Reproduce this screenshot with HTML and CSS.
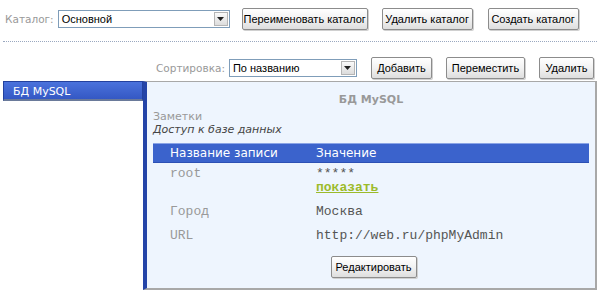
FILE: index.html
```html
<!DOCTYPE html>
<html lang="ru">
<head>
  <meta charset="UTF-8">
  <title>Каталог</title>
  <link rel="stylesheet" href="styles.css">
</head>
<body>
  <div class="toolbar top">
    <span class="label">Каталог:</span>
    <div class="combo catalog">
      <span class="value">Основной</span>
      <span class="arrow"><svg width="7" height="4" viewBox="0 0 7 4"><path d="M0 0h7L3.5 4z" fill="#222"/></svg></span>
    </div>
    <button class="btn b-rename">Переименовать каталог</button>
    <button class="btn b-del">Удалить каталог</button>
    <button class="btn b-new">Создать каталог</button>
  </div>

  <div class="divider"></div>

  <div class="toolbar sort">
    <span class="label">Сортировка:</span>
    <div class="combo sorter">
      <span class="value">По названию</span>
      <span class="arrow"><svg width="7" height="4" viewBox="0 0 7 4"><path d="M0 0h7L3.5 4z" fill="#222"/></svg></span>
    </div>
    <button class="btn b-add">Добавить</button>
    <button class="btn b-move">Переместить</button>
    <button class="btn b-remove">Удалить</button>
  </div>

  <div class="main">
    <div class="tabs">
      <div class="tab active">БД MySQL</div>
    </div>
    <div class="panel">
      <div class="title">БД MySQL</div>
      <div class="notes-label">Заметки</div>
      <div class="notes">Доступ к базе данных</div>

      <table class="records">
        <tr class="head">
          <th class="c-name">Название записи</th>
          <th>Значение</th>
        </tr>
        <tr>
          <td class="c-name">root</td>
          <td class="val">*****<br><a href="#" class="show">показать</a></td>
        </tr>
        <tr>
          <td class="c-name">Город</td>
          <td class="val">Москва</td>
        </tr>
        <tr>
          <td class="c-name">URL</td>
          <td class="val">http://web.ru/phpMyAdmin</td>
        </tr>
      </table>

      <div class="actions">
        <button class="btn">Редактировать</button>
      </div>
    </div>
  </div>
</body>
</html>
```

FILE: styles.css
```css
body {
  margin: 0;
  background: #fff;
  font-family: "DejaVu Sans", Verdana, sans-serif;
  color: #333;
}
.toolbar {
  display: flex;
  align-items: center;
}
.toolbar.top {
  height: 22px;
  padding: 8px 0 0 5px;
}
.toolbar.sort {
  height: 22px;
  padding: 0 6px 0 156px;
  margin-top: 15px;
}
.label {
  font-size: 10.5px;
  color: #999;
}
.combo {
  display: flex;
  align-items: center;
  box-sizing: border-box;
  height: 18px;
  border: 1px solid #7f9db9;
  background: #fff;
  margin-left: 4px;
  padding: 1px;
}
.combo.catalog { width: 172px; }
.combo.sorter { width: 128px; }
.combo .value {
  flex: 1;
  font-family: "Liberation Sans", Arial, sans-serif;
  font-size: 11px;
  color: #000;
  padding-left: 2px;
}
.combo .arrow {
  display: flex;
  align-items: center;
  justify-content: center;
  width: 14px;
  height: 14px;
  box-sizing: border-box;
  border: 1px solid #b5b5b5;
  background: linear-gradient(#fafafa, #dcdcdc);
}
.btn {
  box-sizing: border-box;
  height: 22px;
  padding: 0;
  white-space: nowrap;
  border: 1px solid #8c8c8c;
  border-radius: 2px;
  background: linear-gradient(#ffffff, #f2f2f2 50%, #dedede);
  font-family: "Liberation Sans", Arial, sans-serif;
  font-size: 11px;
  color: #000;
  box-shadow: 1px 1px 0 #d0d0d0;
}
.b-rename { margin-left: 12px; width: 126px; }
.b-del { margin-left: 14px; width: 91px; }
.b-new { margin-left: 15px; width: 91px; }
.b-add { margin-left: 14px; width: 61px; }
.b-move { margin-left: 14px; width: 79px; }
.b-remove { margin-left: 14px; width: 55px; }
.divider {
  margin: 11px 3px 0;
  border-top: 1px dotted #9aa8c0;
}
.main {
  display: flex;
  margin: 2px 3px 0;
  height: 209px;
}
.tabs {
  width: 140px;
}
.tab {
  box-sizing: border-box;
  height: 20px;
  padding: 3px 0 0 9px;
  font-size: 11px;
  color: #fff;
  border: 1px solid #23419e;
  border-bottom: 2px solid #6a7a9a;
  background: linear-gradient(#4a72dc, #3458c4);
}
.panel {
  flex: 1;
  box-sizing: border-box;
  background: #eef5fe;
  border: 1px solid #a8a8a8;
  border-left: 4px solid #2444a8;
  border-right: 2px solid #a8a8a8;
  border-bottom: 2px solid #a8a8a8;
  padding: 0 6px;
}
.title {
  text-align: center;
  font-size: 11px;
  font-weight: bold;
  color: #999;
  margin-top: 11px;
  height: 14px;
}
.notes-label {
  margin-top: 3px;
  font-size: 11px;
  line-height: 13px;
  color: #999;
}
.notes {
  font-size: 11px;
  line-height: 13px;
  font-style: italic;
  color: #444;
}
.records {
  width: 436px;
  border-collapse: collapse;
  margin-top: 7px;
}
.records th {
  height: 18px;
  padding: 0;
  text-align: left;
  font-weight: normal;
  font-size: 12px;
  color: #fff;
  background: #3b63cc;
  border-top: 1px solid #8aa4e6;
  border-bottom: 1px solid #2c50b4;
}
.records td {
  padding: 4px 0 6px;
  vertical-align: top;
  font-family: "Liberation Mono", "Courier New", monospace;
  font-size: 13px;
  line-height: 14px;
  color: #999;
}
.records .c-name {
  width: 146px;
  padding-left: 17px;
}
.records td.val {
  color: #555;
}
.show {
  font-weight: bold;
  color: #9cbb2a;
}
.actions {
  text-align: center;
  margin-top: 7px;
}
.actions .btn {
  width: 86px;
  margin-left: 5px;
}
```
